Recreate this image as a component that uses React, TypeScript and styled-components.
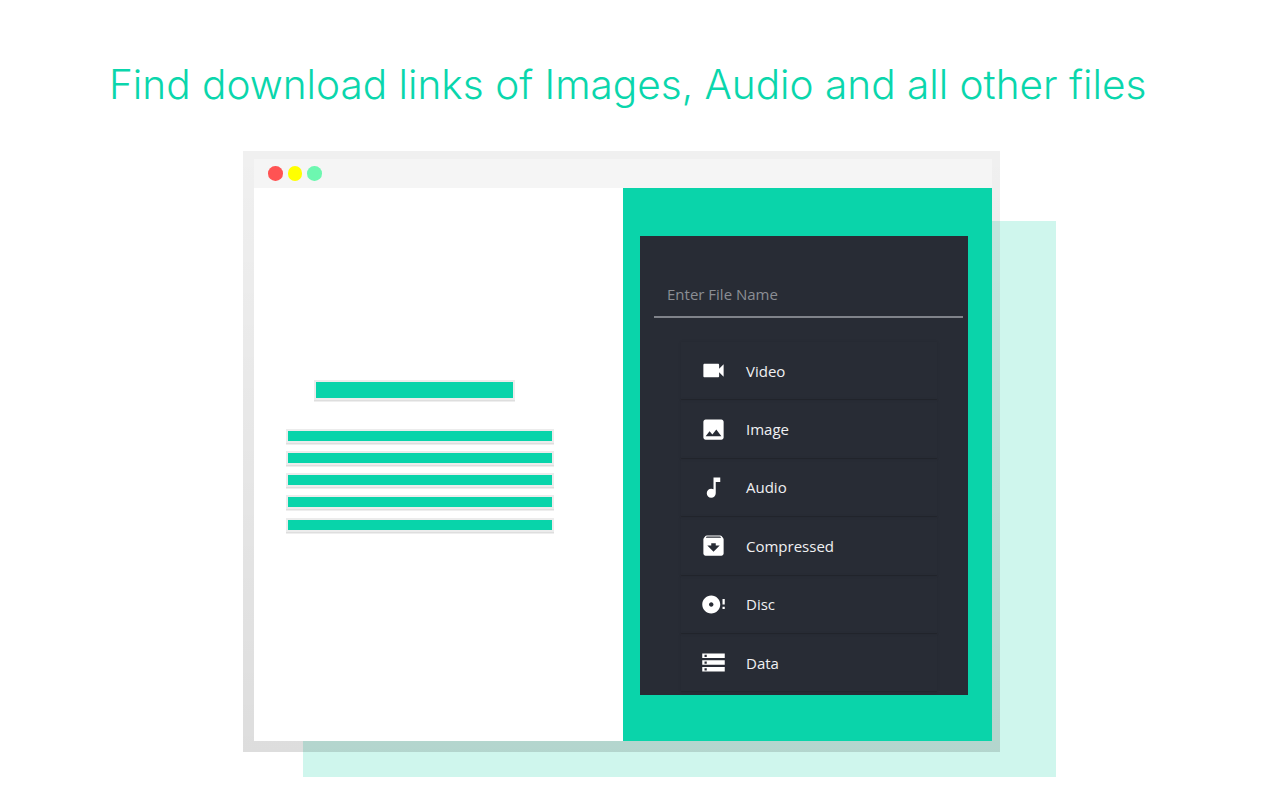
import styled, { createGlobalStyle } from "styled-components";
import type { ReactNode } from "react";
import {
  MdVideocam,
  MdImage,
  MdMusicNote,
  MdArchive,
  MdDiscFull,
  MdStorage,
} from "react-icons/md";

const GlobalStyle = createGlobalStyle`
  html, body {
    margin: 0;
    padding: 0;
    background: #fff;
  }

  * {
    box-sizing: border-box;
  }
`;

const fileTypes: { label: string; icon: ReactNode }[] = [
  { label: "Video", icon: <MdVideocam /> },
  { label: "Image", icon: <MdImage /> },
  { label: "Audio", icon: <MdMusicNote /> },
  { label: "Compressed", icon: <MdArchive /> },
  { label: "Disc", icon: <MdDiscFull /> },
  { label: "Data", icon: <MdStorage /> },
];

const textLines = [0, 1, 2, 3, 4];

export default function App() {
  return (
    <Page>
      <GlobalStyle />
      <Title>Find download links of Images, Audio and all other files</Title>
      <Stage>
        <Backdrop />
        <Frame>
          <TitleBar>
            <Dot $color="#ff5353" />
            <Dot $color="#ffff00" />
            <Dot $color="#6df7b0" />
          </TitleBar>
          <Content>
            <ArticlePane>
              <Heading />
              <Lines>
                {textLines.map((line) => (
                  <Line key={line} />
                ))}
              </Lines>
            </ArticlePane>
            <ExtensionPane>
              <Popup>
                <SearchField>
                  <Placeholder>Enter File Name</Placeholder>
                </SearchField>
                <TypeList>
                  {fileTypes.map((type) => (
                    <TypeRow key={type.label}>
                      <TypeIcon>{type.icon}</TypeIcon>
                      <TypeLabel>{type.label}</TypeLabel>
                    </TypeRow>
                  ))}
                </TypeList>
              </Popup>
            </ExtensionPane>
          </Content>
        </Frame>
      </Stage>
    </Page>
  );
}

const Page = styled.div`
  width: 1280px;
  height: 800px;
  overflow: hidden;
  padding-top: 59px;
  background: #fff;
`;

const Title = styled.h1`
  margin: 0 0 41px;
  padding-left: 109px;
  height: 51px;

  font-family: "Inter", "Liberation Sans", sans-serif;
  font-size: 40.55px;
  font-weight: 300;
  line-height: 51px;
  white-space: nowrap;
  color: #0ad6ac;
`;

const Stage = styled.div`
  position: relative;
  width: 757px;
  margin-left: 243px;
`;

const Backdrop = styled.div`
  position: absolute;
  top: 70px;
  left: 60px;
  width: 753px;
  height: 556px;
  background: #cff6ed;
`;

const Frame = styled.div`
  position: relative;
  display: flex;
  flex-direction: column;
  height: 601px;
  padding: 8px 8px 11px 11px;
  background: linear-gradient(rgba(0, 0, 0, 0.06), rgba(0, 0, 0, 0.135));
`;

const TitleBar = styled.div`
  display: flex;
  align-items: center;
  gap: 5px;
  height: 29px;
  padding-left: 14px;
  background: #f5f5f5;
`;

const Dot = styled.span<{ $color: string }>`
  width: 14.6px;
  height: 14.6px;
  border-radius: 50%;
  background: ${({ $color }) => $color};
`;

const Content = styled.div`
  display: flex;
  flex: 1;
  min-height: 0;
`;

const ArticlePane = styled.div`
  display: flex;
  flex-direction: column;
  width: 369px;
  padding: 193.5px 0 0 34px;
  background: #fff;
`;

const Heading = styled.div`
  width: 197px;
  height: 16px;
  margin-left: 28px;
  background: #08d4aa;
  box-shadow: 0 0 0 2px #ececec, 0 1.5px 0 2px #dedede;
`;

const Lines = styled.div`
  display: flex;
  flex-direction: column;
  gap: 12.25px;
  margin-top: 33px;
`;

const Line = styled.div`
  width: 264px;
  height: 10px;
  background: #08d4aa;
  box-shadow: 0 0 0 2px #ececec, 0 1.5px 0 2px #dedede;
`;

const ExtensionPane = styled.div`
  width: 369px;
  padding: 48px 24px 46px 17px;
  background: #0ad4aa;
`;

const Popup = styled.div`
  height: 459px;
  overflow: hidden;
  padding: 0 5px 0 14px;
  background: #282c35;
`;

const SearchField = styled.div`
  display: flex;
  align-items: center;
  height: 82px;
  padding: 40px 0 4px 13px;
  border-bottom: 2px solid #80838a;
`;

const Placeholder = styled.span`
  font-family: "Open Sans", "Liberation Sans", sans-serif;
  font-size: 15px;
  color: #8b8e94;
`;

const TypeList = styled.div`
  width: 256px;
  margin: 24px 0 0 27px;
`;

const TypeRow = styled.div`
  display: flex;
  align-items: center;
  height: 58.4px;
  padding-left: 19px;
  border-bottom: 1.5px solid #23262d;
  box-shadow: 0 0 3px rgba(0, 0, 0, 0.1);
`;

const TypeIcon = styled.span`
  display: flex;
  flex-shrink: 0;
  width: 27px;
  font-size: 27px;
  color: #fff;
`;

const TypeLabel = styled.span`
  margin-left: 19px;

  font-family: "Open Sans", "Liberation Sans", sans-serif;
  font-size: 15px;
  color: #f0f0f2;
`;
